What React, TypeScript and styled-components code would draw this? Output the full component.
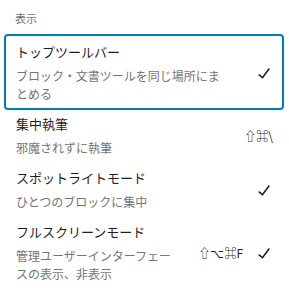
import { createGlobalStyle, styled } from "styled-components"

const GlobalStyle = createGlobalStyle`
  html, body {
    margin: 0;
    padding: 0;
    background: #fff;
  }
  body {
    font-family: "Noto Sans CJK JP", "Noto Sans", sans-serif;
    -webkit-font-smoothing: antialiased;
  }
`

interface MenuEntry {
  title: string
  description: string
  shortcut?: string
  checked?: boolean
  focused?: boolean
}

const entries: MenuEntry[] = [
  {
    title: "トップツールバー",
    description: "ブロック・文書ツールを同じ場所にまとめる",
    checked: true,
    focused: true,
  },
  {
    title: "集中執筆",
    description: "邪魔されずに執筆",
    shortcut: "⇧⌘\\",
  },
  {
    title: "スポットライトモード",
    description: "ひとつのブロックに集中",
    checked: true,
  },
  {
    title: "フルスクリーンモード",
    description: "管理ユーザーインターフェースの表示、非表示",
    shortcut: "⇧⌥⌘F",
    checked: true,
  },
]

const CheckIcon = () => (
  <svg width="24" height="24" viewBox="0 0 24 24" aria-hidden="true">
    <path d="M16.7 7.1l-6.3 8.5-3.3-2.5-.9 1.2 4.5 3.4L17.9 8z" fill="#1e1e1e" />
  </svg>
)

export default function App() {
  return (
    <>
      <GlobalStyle />
      <StyledMenu>
        <GroupLabel>表示</GroupLabel>
        {entries.map((entry) => (
          <MenuItem key={entry.title} $focused={entry.focused}>
            <ItemInfo>
              <ItemTitle>{entry.title}</ItemTitle>
              <ItemDescription>{entry.description}</ItemDescription>
            </ItemInfo>
            {entry.shortcut && <Shortcut>{entry.shortcut}</Shortcut>}
            {entry.checked && (
              <IconSlot>
                <CheckIcon />
              </IconSlot>
            )}
          </MenuItem>
        ))}
      </StyledMenu>
    </>
  )
}

const StyledMenu = styled.div`
  width: 276px;
  padding: 8px 7px 0 6px;
  display: flex;
  flex-flow: column nowrap;
`

const GroupLabel = styled.div`
  padding-left: 9px;
  margin-bottom: 8px;
  font-size: 11px;
  line-height: 20px;
  color: #757575;
`

const MenuItem = styled.div<{ $focused?: boolean }>`
  display: flex;
  flex-flow: row nowrap;
  align-items: center;
  padding: 6px 6px 5px 10px;
  border-radius: 2px;
  outline: ${(p) => (p.$focused ? "2px solid #007cba" : "none")};
`

const ItemInfo = styled.div`
  flex: 1;
  min-width: 0;
  margin-right: 24px;
  display: flex;
  flex-flow: column nowrap;
`

const ItemTitle = styled.span`
  font-size: 13px;
  line-height: 20px;
  color: #1e1e1e;
`

const ItemDescription = styled.span`
  margin-top: 5px;
  font-size: 12px;
  line-height: 18px;
  color: #757575;
`

const Shortcut = styled.span`
  padding-right: 3px;
  font-size: 12px;
  line-height: 18px;
  color: #1e1e1e;
  white-space: nowrap;
`

const IconSlot = styled.span`
  margin-left: 6px;
  display: flex;
  width: 24px;
  height: 24px;
`
